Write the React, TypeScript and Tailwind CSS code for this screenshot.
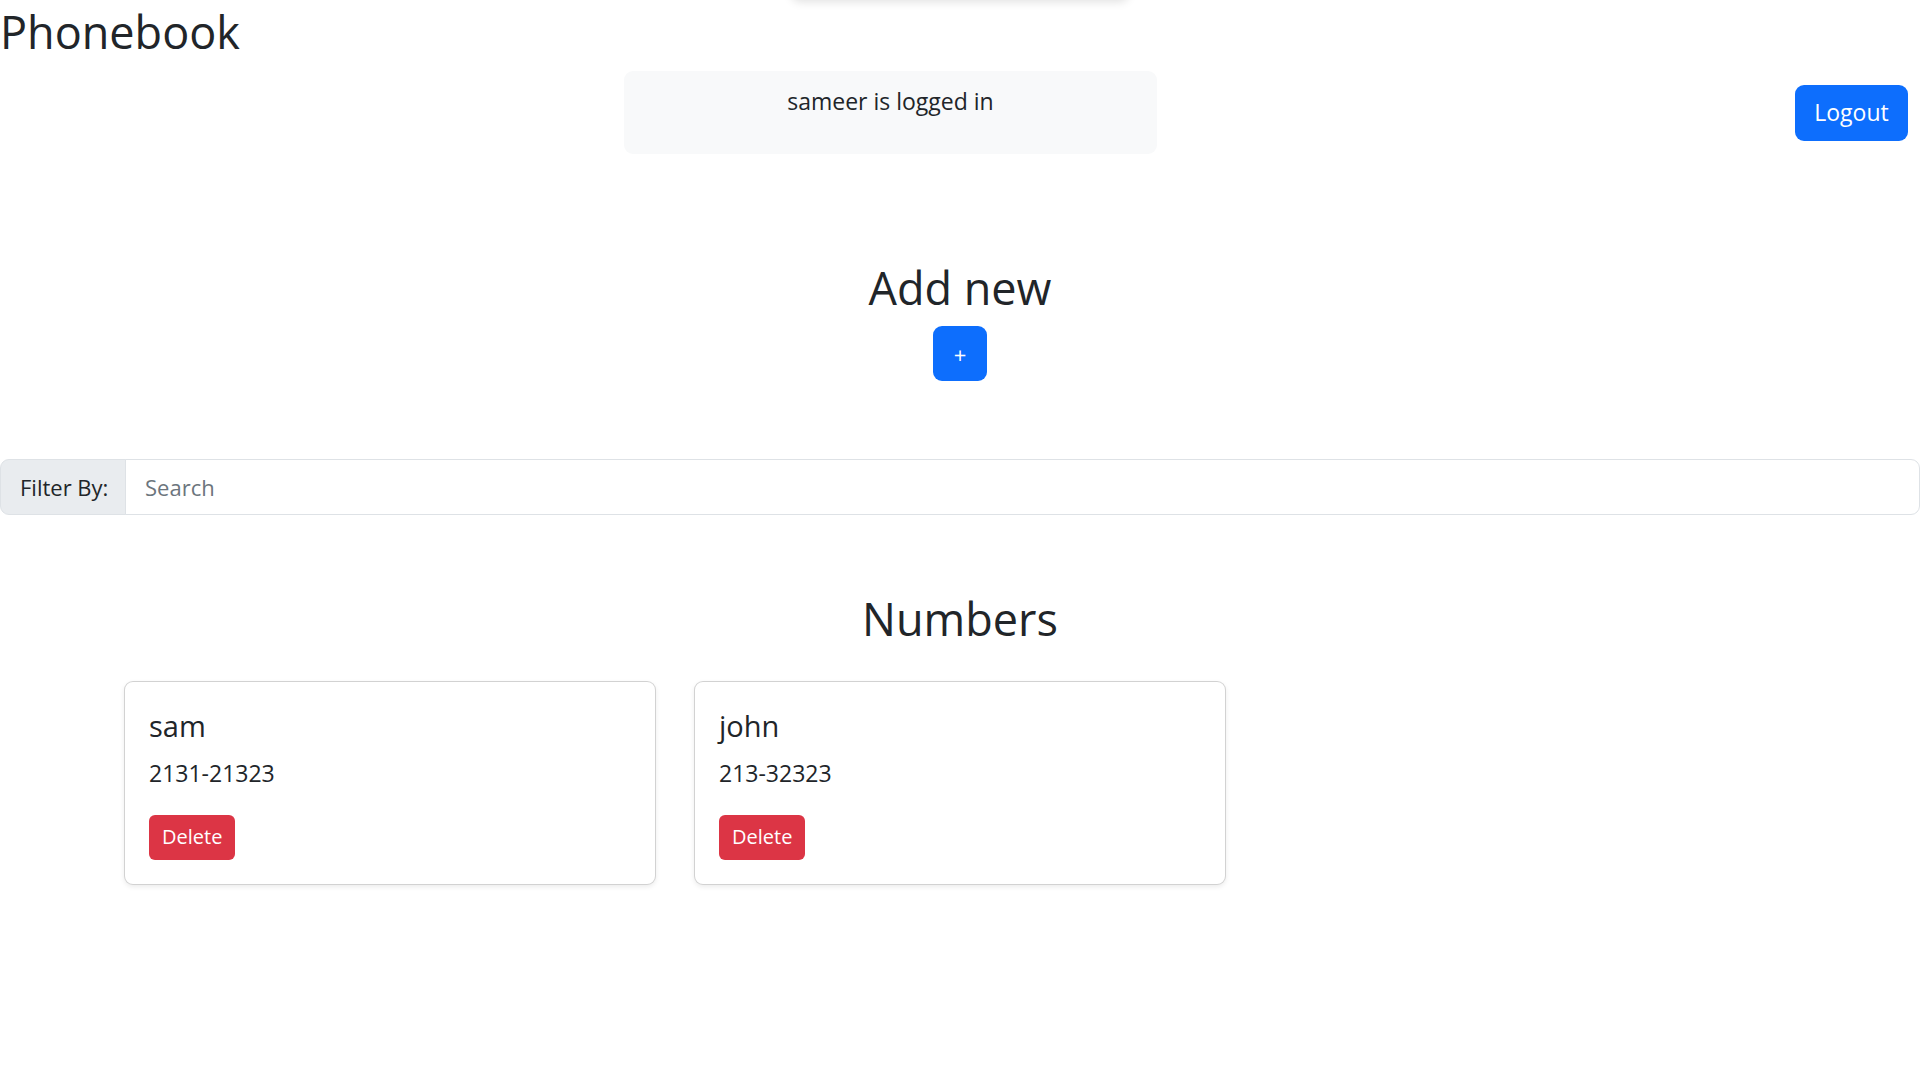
import { useState } from 'react';

const people = [
  { id: 1, name: 'sam', number: '2131-21323' },
  { id: 2, name: 'john', number: '213-32323' },
];

export default function App() {
  const [filter, setFilter] = useState('');

  const shown = people.filter((p) => p.name.toLowerCase().includes(filter.toLowerCase()));

  return (
    <div
      className="relative min-h-screen bg-white text-[#212529] overflow-hidden"
      style={{ fontFamily: '"Segoe UI", "Open Sans", "Noto Sans", sans-serif' }}
    >
      {/* notification sliding out above the page */}
      <div className="absolute left-1/2 top-0 w-[337px] h-[60px] -translate-x-1/2 -translate-y-full bg-white rounded-[9px] shadow-[0_2px_10px_rgba(0,0,0,0.12)]" />

      {/* Header */}
      <h1 className="pt-[5px] mb-[12px] text-[45px] leading-[1.2] font-normal">Phonebook</h1>

      <div className="flex items-center">
        <div className="w-[624px] shrink-0" />
        <div className="w-[533px] shrink-0 bg-[#f8f9fa] rounded-[9px] pt-[12px] pb-[35px] text-center">
          <p className="text-[23px] leading-[36px]">sameer is logged in</p>
        </div>
        <div className="flex-1" />
        <button className="mr-[12px] h-[56px] w-[113px] rounded-[9px] bg-[#0d6efd] text-white text-[23px]">
          Logout
        </button>
      </div>

      {/* Add new */}
      <section className="mt-[107px] flex flex-col items-center">
        <h2 className="text-[45px] leading-[1.2] font-normal">Add new</h2>
        <button className="mt-[11px] h-[55px] w-[54px] rounded-[9px] bg-[#0d6efd] text-white text-[22px] leading-none">
          +
        </button>
      </section>

      {/* Filter */}
      <div className="mt-[78px] flex h-[56px]">
        <span className="flex items-center w-[126px] shrink-0 pl-[19px] bg-[#e9ecef] border border-[#dee2e6] rounded-l-[9px] text-[22px]">
          Filter By:
        </span>
        <input
          value={filter}
          onChange={(e) => setFilter(e.target.value)}
          placeholder="Search"
          className="flex-1 -ml-px pl-[19px] border border-[#dee2e6] rounded-r-[9px] text-[22px] placeholder:text-[#6c757d] outline-none"
        />
      </div>

      {/* Numbers */}
      <section className="mt-[77px]">
        <h2 className="text-center text-[45px] leading-[1.2] font-normal">Numbers</h2>
        <div className="mt-[35px] pl-[124px] flex gap-[38px]">
          {shown.map((p) => (
            <div
              key={p.id}
              className="w-[532px] border border-black/[0.175] rounded-[9px] px-[24px] pt-[27px] pb-[24px] bg-white shadow-[0_2px_5px_rgba(0,0,0,0.08)]"
            >
              <h5 className="text-[29px] leading-[1.2] mb-[11px] font-normal">{p.name}</h5>
              <p className="text-[23px] leading-[36px] mb-[24px]">{p.number}</p>
              <button className="h-[45px] px-[13px] rounded-[6px] bg-[#dc3545] text-white text-[20px]">
                Delete
              </button>
            </div>
          ))}
        </div>
      </section>
    </div>
  );
}
